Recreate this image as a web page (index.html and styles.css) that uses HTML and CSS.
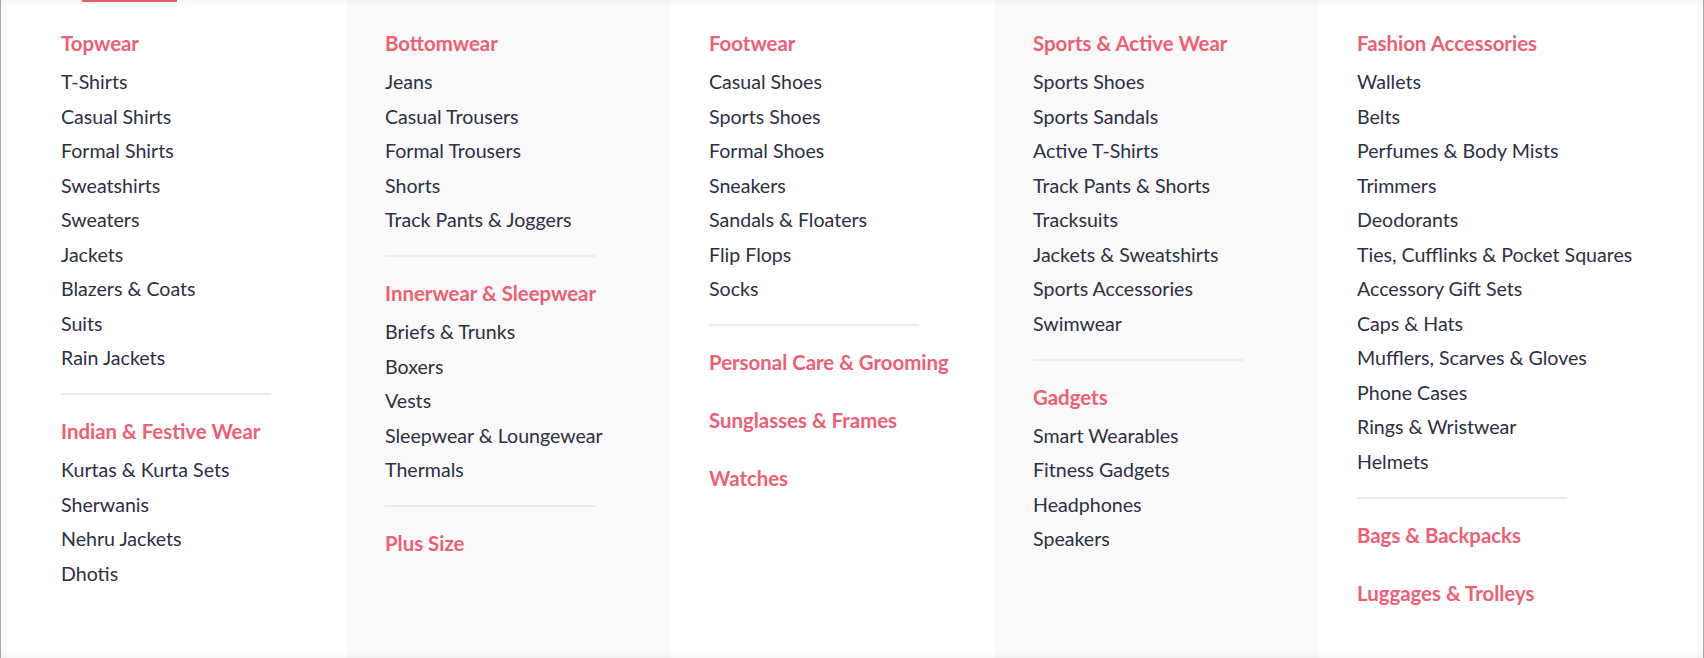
FILE: index.html
```html
<!DOCTYPE html>
<html lang="en">
<head>
<meta charset="utf-8">
<title>Men Menu</title>
<link rel="stylesheet" href="styles.css">
</head>
<body>
<div class="menu">
  <span class="indicator"></span>
  <div class="col col-first">
    <ul class="group">
      <li class="cat">Topwear</li>
      <li>T-Shirts</li>
      <li>Casual Shirts</li>
      <li>Formal Shirts</li>
      <li>Sweatshirts</li>
      <li>Sweaters</li>
      <li>Jackets</li>
      <li>Blazers &amp; Coats</li>
      <li>Suits</li>
      <li>Rain Jackets</li>
    </ul>
    <hr class="rule">
    <ul class="group">
      <li class="cat">Indian &amp; Festive Wear</li>
      <li>Kurtas &amp; Kurta Sets</li>
      <li>Sherwanis</li>
      <li>Nehru Jackets</li>
      <li>Dhotis</li>
    </ul>
  </div>
  <div class="col col-alt">
    <ul class="group">
      <li class="cat">Bottomwear</li>
      <li>Jeans</li>
      <li>Casual Trousers</li>
      <li>Formal Trousers</li>
      <li>Shorts</li>
      <li>Track Pants &amp; Joggers</li>
    </ul>
    <hr class="rule">
    <ul class="group">
      <li class="cat">Innerwear &amp; Sleepwear</li>
      <li>Briefs &amp; Trunks</li>
      <li>Boxers</li>
      <li>Vests</li>
      <li>Sleepwear &amp; Loungewear</li>
      <li>Thermals</li>
    </ul>
    <hr class="rule">
    <ul class="group">
      <li class="cat solo">Plus Size</li>
    </ul>
  </div>
  <div class="col">
    <ul class="group">
      <li class="cat">Footwear</li>
      <li>Casual Shoes</li>
      <li>Sports Shoes</li>
      <li>Formal Shoes</li>
      <li>Sneakers</li>
      <li>Sandals &amp; Floaters</li>
      <li>Flip Flops</li>
      <li>Socks</li>
    </ul>
    <hr class="rule">
    <ul class="group">
      <li class="cat solo">Personal Care &amp; Grooming</li>
      <li class="cat solo">Sunglasses &amp; Frames</li>
      <li class="cat solo">Watches</li>
    </ul>
  </div>
  <div class="col col-alt">
    <ul class="group">
      <li class="cat">Sports &amp; Active Wear</li>
      <li>Sports Shoes</li>
      <li>Sports Sandals</li>
      <li>Active T-Shirts</li>
      <li>Track Pants &amp; Shorts</li>
      <li>Tracksuits</li>
      <li>Jackets &amp; Sweatshirts</li>
      <li>Sports Accessories</li>
      <li>Swimwear</li>
    </ul>
    <hr class="rule">
    <ul class="group">
      <li class="cat">Gadgets</li>
      <li>Smart Wearables</li>
      <li>Fitness Gadgets</li>
      <li>Headphones</li>
      <li>Speakers</li>
    </ul>
  </div>
  <div class="col col-last">
    <ul class="group">
      <li class="cat">Fashion Accessories</li>
      <li>Wallets</li>
      <li>Belts</li>
      <li>Perfumes &amp; Body Mists</li>
      <li>Trimmers</li>
      <li>Deodorants</li>
      <li>Ties, Cufflinks &amp; Pocket Squares</li>
      <li>Accessory Gift Sets</li>
      <li>Caps &amp; Hats</li>
      <li>Mufflers, Scarves &amp; Gloves</li>
      <li>Phone Cases</li>
      <li>Rings &amp; Wristwear</li>
      <li>Helmets</li>
    </ul>
    <hr class="rule">
    <ul class="group">
      <li class="cat solo">Bags &amp; Backpacks</li>
      <li class="cat solo">Luggages &amp; Trolleys</li>
    </ul>
  </div>
</div>
</body>
</html>
```
FILE: styles.css
```css
html, body {
  margin: 0;
  padding: 0;
  background: #ffffff;
}

body {
  font-family: Lato, "Open Sans", "Liberation Sans", sans-serif;
  color: #2c3042;
}

.menu {
  position: relative;
  display: flex;
  height: 658px;
  box-sizing: border-box;
  border-left: 1px solid #a9a9b3;
  border-right: 1px solid #a9a9b3;
  padding-left: 22px;
  background: #ffffff;
}

.menu::after {
  content: "";
  position: absolute;
  inset: 0;
  pointer-events: none;
  box-shadow: inset 0 0 10px rgba(0, 0, 0, 0.07);
}

.indicator {
  position: absolute;
  top: 0;
  left: 81px;
  width: 95px;
  height: 2px;
  background: #ee5f73;
}

.col {
  width: 324px;
  flex: none;
  box-sizing: border-box;
  padding: 26px 38px 0 38px;
  background: #ffffff;
}

.col-alt {
  background: #f9f9f9;
}

.col-last {
  flex: 1 1 auto;
}

.group {
  list-style: none;
  margin: 0;
  padding: 0;
}

.group li {
  font-size: 19.6px;
  line-height: 34.5px;
  white-space: nowrap;
}

.group li.cat {
  color: #ee5f73;
  font-weight: 700;
  font-size: 20.4px;
  margin-bottom: 4.5px;
}

.group li.cat.solo {
  margin-bottom: 23.5px;
}

.rule {
  width: 210px;
  margin: 17.5px 0 19px 0;
  border: 0;
  height: 2px;
  background: #ebebed;
}
```
